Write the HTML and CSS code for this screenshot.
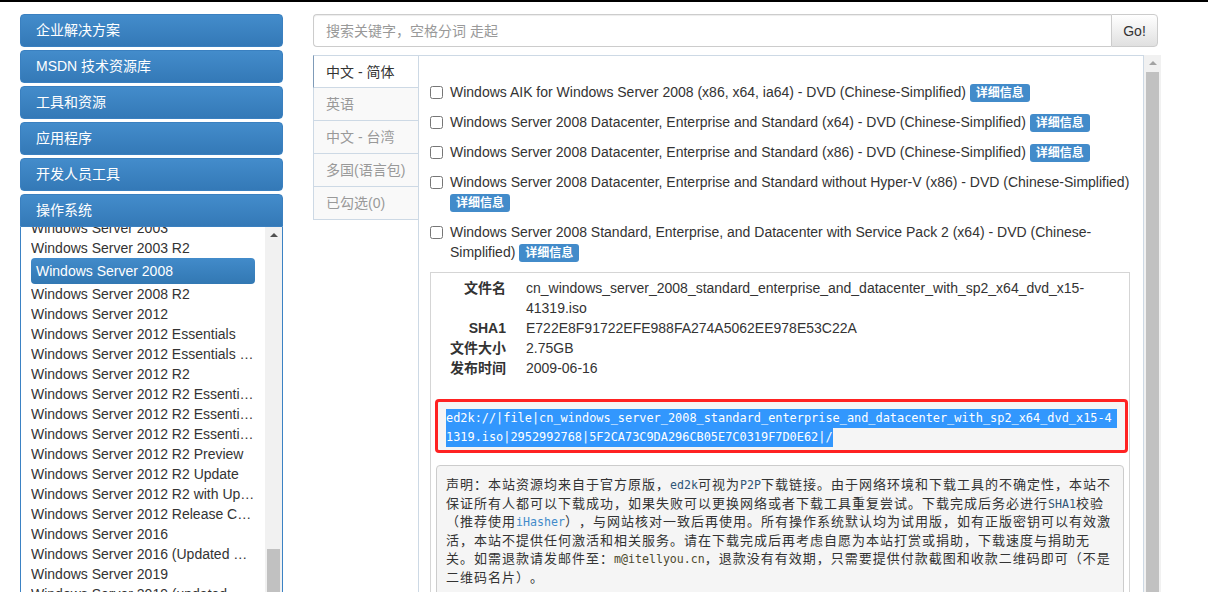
FILE: index.html
```html
<!DOCTYPE html>
<html lang="zh-cn">
<head>
<title>MSDN, 我告诉你</title>
<meta charset="utf-8">
<link rel="stylesheet" href="styles.css">
</head>
<body>
<div class="topline"></div>
<div class="page">
    <div class="side">
        <div class="side-head">企业解决方案</div>
        <div class="side-head">MSDN 技术资源库</div>
        <div class="side-head">工具和资源</div>
        <div class="side-head">应用程序</div>
        <div class="side-head">开发人员工具</div>
        <div class="side-head side-open">操作系统</div>
        <div class="os-box">
            <ul class="os-list">
                <li>Windows Server 2003</li>
                <li>Windows Server 2003 R2</li>
                <li class="on">Windows Server 2008</li>
                <li>Windows Server 2008 R2</li>
                <li>Windows Server 2012</li>
                <li>Windows Server 2012 Essentials</li>
                <li>Windows Server 2012 Essentials and Standard</li>
                <li>Windows Server 2012 R2</li>
                <li>Windows Server 2012 R2 Essentials</li>
                <li>Windows Server 2012 R2 Essentials (updated)</li>
                <li>Windows Server 2012 R2 Essentials with Update</li>
                <li>Windows Server 2012 R2 Preview</li>
                <li>Windows Server 2012 R2 Update</li>
                <li>Windows Server 2012 R2 with Update</li>
                <li>Windows Server 2012 Release Candidate</li>
                <li>Windows Server 2016</li>
                <li>Windows Server 2016 (Updated Feb 2018)</li>
                <li>Windows Server 2019</li>
                <li>Windows Server 2019 (updated March 2019)</li>
                <li>Windows Server 2019 (updated July 2019)</li>
            </ul>
            <div class="scrollbar"><span class="arrow"></span><span class="thumb thumb-low"></span></div>
        </div>
    </div>

    <div class="main">
        <div class="search">
            <input type="text" placeholder="搜索关键字，空格分词 走起">
            <button>Go!</button>
        </div>

        <div class="tabs">
            <ul class="tab-nav">
                <li class="on">中文 - 简体</li>
                <li>英语</li>
                <li>中文 - 台湾</li>
                <li>多国(语言包)</li>
                <li>已勾选(0)</li>
            </ul>

            <div class="tab-pane">
                <ul class="res-list">
                    <li><input type="checkbox"><span>Windows AIK for Windows Server 2008 (x86, x64, ia64) - DVD (Chinese-Simplified) <span class="label">详细信息</span></span></li>
                    <li><input type="checkbox"><span>Windows Server 2008 Datacenter, Enterprise and Standard (x64) - DVD (Chinese-Simplified) <span class="label">详细信息</span></span></li>
                    <li><input type="checkbox"><span>Windows Server 2008 Datacenter, Enterprise and Standard (x86) - DVD (Chinese-Simplified) <span class="label">详细信息</span></span></li>
                    <li><input type="checkbox"><span>Windows Server 2008 Datacenter, Enterprise and Standard without Hyper-V (x86) - DVD (Chinese-Simplified) <span class="label">详细信息</span></span></li>
                    <li><input type="checkbox"><span>Windows Server 2008 Standard, Enterprise, and Datacenter with Service Pack 2 (x64) - DVD (Chinese-Simplified) <span class="label">详细信息</span></span></li>
                </ul>

                <div class="detail">
                    <dl>
                        <dt>文件名</dt><dd>cn_windows_server_2008_standard_enterprise_and_datacenter_with_sp2_x64_dvd_x15-41319.iso</dd>
                        <dt>SHA1</dt><dd>E722E8F91722EFE988FA274A5062EE978E53C22A</dd>
                        <dt>文件大小</dt><dd>2.75GB</dd>
                        <dt>发布时间</dt><dd>2009-06-16</dd>
                    </dl>

                    <pre class="ed2k"><span class="sel sel-first">ed2k://|file|cn_windows_server_2008_standard_enterprise_and_datacenter_with_sp2_x64_dvd_x15-4</span><span class="sel">1319.iso|2952992768|5F2CA73C9DA296CB05E7C0319F7D0E62|/</span></pre>

                    <div class="notice">
                        声明：本站资源均来自于官方原版，<span class="en">ed2k</span>可视为<span class="en">P2P</span>下载链接。由于网络环境和下载工具的不确定性，本站不<br>
                        保证所有人都可以下载成功，如果失败可以更换网络或者下载工具重复尝试。下载完成后务必进行<span class="en">SHA1</span>校验<br>
                        （推荐使用<span class="en link">iHasher</span>），与网站核对一致后再使用。所有操作系统默认均为试用版，如有正版密钥可以有效激<br>
                        活，本站不提供任何激活和相关服务。请在下载完成后再考虑自愿为本站打赏或捐助，下载速度与捐助无<br>
                        关。如需退款请发邮件至：<span class="en mail">m@itellyou.cn</span>，退款没有有效期，只需要提供付款截图和收款二维码即可（不是<br>
                        二维码名片）。
                    </div>
                </div>
            </div>

            <div class="scrollbar scrollbar-main"><span class="arrow"></span><span class="thumb"></span></div>
        </div>
    </div>
</div>
</body>
</html>
```

FILE: styles.css
```css
html,body{margin: 0;padding: 0;height: 592px;overflow: hidden;background: #fff;}
body{font-family: "Liberation Sans","Noto Sans CJK SC",sans-serif;font-size: 14px;color: #333;}
ul,dl,pre{margin: 0;padding: 0;}
li{list-style: none;}

.topline{height: 2px;background: #000;}
.page{display: flex;gap: 30px;padding: 12px 0 0 20px;}

/* 左侧菜单 */
.side{width: 263px;flex: none;}
.side-head{height: 33px;line-height: 31px;padding-left: 15px;margin-bottom: 3px;color: #fff;border: 1px solid #3a80c0;border-radius: 4px;background: linear-gradient(#438ccb,#3479b7);box-sizing: border-box;}
.side-open{margin-bottom: 0;border-radius: 4px 4px 0 0;}
.os-box{height: 400px;display: flex;border: 1px solid #3b82c4;border-top: 0;overflow: hidden;}
.os-list{flex: 1;min-width: 0;margin-top: -9px;padding: 0 10px;}
.os-list li{height: 20px;line-height: 20px;white-space: nowrap;overflow: hidden;text-overflow: ellipsis;}
.os-list li.on{height: 26px;line-height: 26px;padding: 0 5px;color: #fff;border-radius: 4px;background: linear-gradient(#428bca,#3278b3);}

.scrollbar{width: 17px;flex: none;display: flex;flex-direction: column;align-items: center;background: #f1f1f1;}
.arrow{width: 0;height: 0;margin: 6px 0 7px;border: 4px solid transparent;border-top: 0;border-bottom-color: #505050;}
.thumb{width: 13px;height: 600px;flex: none;background: #c1c1c1;}
.thumb-low{margin-top: 305px;}
.scrollbar-main{height: 560px;}
.scrollbar-main .arrow{border-bottom-color: #a3a3a3;}

/* 右侧 */
.main{width: 848px;flex: none;}
.search{display: flex;width: 845px;height: 33px;}
.search input{flex: 1;padding: 0 12px;font: 14px "Liberation Sans","Noto Sans CJK SC",sans-serif;color: #555;border: 1px solid #ccc;border-right: 0;border-radius: 4px 0 0 4px;box-shadow: inset 0 1px 1px rgba(0,0,0,.075);outline: none;}
.search input::placeholder{color: #999;}
.search button{width: 47px;padding: 0;font: 14px "Liberation Sans",sans-serif;color: #333;border: 1px solid #ccc;border-radius: 0 4px 4px 0;background: linear-gradient(#fff,#e0e0e0);}

.tabs{display: flex;margin-top: 8px;height: 560px;}
.tab-nav{width: 105px;flex: none;}
.tab-nav li{height: 33px;line-height: 32px;padding-left: 12px;color: #999;background: #f9f9f9;border: 1px solid #cdd9e5;border-top: 0;border-right: 0;box-sizing: border-box;}
.tab-nav li.on{color: #333;background: #fff;border-top: 1px solid #cdd9e5;border-left-color: #7f9bb8;}
.tab-pane{flex: 1;min-width: 0;padding: 26px 11px 0;border: 1px solid #cdd9e5;overflow: hidden;}

.res-list li{display: flex;gap: 7px;line-height: 20px;margin-bottom: 10px;}
.res-list input{width: 13px;height: 13px;margin: 4px 0 0;flex: none;}
.label{display: inline-block;vertical-align: top;margin-top: 2px;padding: 3px 6px;font-size: 12px;line-height: 12px;font-weight: bold;color: #fff;background: #428bca;border-radius: 3px;}

.detail{height: 420px;margin-right: 2px;padding-top: 5px;border: 1px solid #d5d5d5;}
.detail dl{display: grid;grid-template-columns: 75px 1fr;column-gap: 20px;padding-right: 30px;line-height: 20px;}
.detail dt{text-align: right;font-weight: bold;}
.detail dd{margin: 0;}

.ed2k{margin: 21px 1px 0 4px;padding: 7px 6px 3px 8px;font: 11.9px/19px "DejaVu Sans Mono",monospace;white-space: pre;background: #f5f5f5;border: 3px solid #ff2222;border-radius: 4px;}
.sel{display: block;width: fit-content;color: #fff;background: #3297fd;}
.sel-first{padding-right: 5px;}

.notice{margin: 12px 5px 0;padding: 9px 9px;height: 200px;font-family: "Noto Sans CJK SC",sans-serif;font-size: 13px;line-height: 18.5px;letter-spacing: 1px;text-spacing-trim: space-all;white-space: nowrap;overflow: hidden;background: #f5f5f5;border: 1px solid #ccc;border-radius: 4px;}
.notice .en{font: 11.6px "DejaVu Sans Mono",monospace;letter-spacing: 0;color: #2f5577;}
.notice .link{color: #428bca;}
.notice .mail{color: #4d4a2e;}
```
